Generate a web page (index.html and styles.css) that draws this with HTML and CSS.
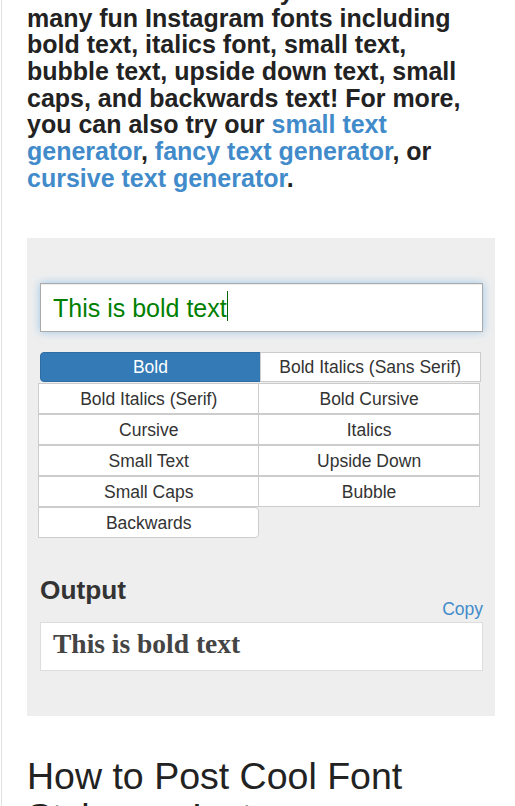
FILE: index.html
```html
<!DOCTYPE html>
<html lang="en">
<head>
<meta charset="utf-8">
<title>Instagram Fonts</title>
<link rel="stylesheet" href="styles.css">
</head>
<body>
<div class="page">
  <p class="intro">This cool tool will let you use and see many fun Instagram fonts including bold text, italics font, small text, bubble text, upside down text, small caps, and backwards text! For more, you can also try our <a href="#">small text generator</a>, <a href="#">fancy text generator</a>, or <a href="#">cursive text generator</a>.</p>

  <section class="tool">
    <div class="field" role="textbox"><span class="field-text">This is bold text</span><span class="caret"></span></div>

    <div class="styles-top">
      <button class="btn active">Bold</button>
      <button class="btn">Bold Italics (Sans Serif)</button>
    </div>
    <div class="styles-grid">
      <button class="btn">Bold Italics (Serif)</button>
      <button class="btn">Bold Cursive</button>
      <button class="btn">Cursive</button>
      <button class="btn">Italics</button>
      <button class="btn">Small Text</button>
      <button class="btn">Upside Down</button>
      <button class="btn">Small Caps</button>
      <button class="btn">Bubble</button>
      <button class="btn last">Backwards</button>
    </div>

    <div class="out-head">
      <h4>Output</h4>
      <a href="#" class="copy">Copy</a>
    </div>
    <div class="output">This is bold text</div>
  </section>

  <h2 class="section-title">How to Post Cool Font Styles on Instagram</h2>
</div>
</body>
</html>
```
FILE: styles.css
```css
html, body {
  margin: 0;
  padding: 0;
  background: #fff;
}

body {
  font-family: "Liberation Sans", Arial, sans-serif;
  color: #333;
  height: 806px;
  overflow: hidden;
}

.page {
  margin-left: 1px;
  border-left: 1px solid #e2e2e2;
  padding: 0 20px 0 25px;
  min-height: 806px;
}

.intro {
  margin: -22px 4px 46.7px 0;
  font-size: 25px;
  font-weight: bold;
  line-height: 26.67px;
  color: #222;
}

.intro a {
  color: #428bca;
  text-decoration: none;
}

.tool {
  background: #eee;
  padding: 45.3px 12px 45.4px 13px;
}

.field {
  box-sizing: border-box;
  height: 49px;
  border: 1px solid #aaa;
  background: #fff;
  box-shadow: inset 0 1px 1px rgba(0, 0, 0, .075), 0 0 8px rgba(102, 175, 233, .6);
  padding: 0 12px;
  font-family: "Liberation Sans", Arial, sans-serif;
  font-size: 25px;
  line-height: 48px;
  color: #008000;
  white-space: nowrap;
}

.caret {
  display: inline-block;
  width: 1px;
  height: 30px;
  background: #006400;
  vertical-align: -4px;
}

.btn {
  box-sizing: border-box;
  margin: 0;
  padding: 0;
  border: 1px solid #ccc;
  background: #fff;
  color: #333;
  font-family: "Liberation Sans", Arial, sans-serif;
  font-size: 17.5px;
  line-height: 29px;
  text-align: center;
  white-space: nowrap;
}

.styles-top {
  display: flex;
  width: 440.7px;
  margin-top: 20px;
  margin-bottom: 1px;
}

.styles-top .btn {
  flex: 1 1 0;
  height: 30px;
  line-height: 28px;
}

.styles-top .btn + .btn {
  margin-left: -1px;
}

.btn.active {
  background: #337ab7;
  border-color: #2e6da4;
  color: #fff;
  border-radius: 4px 0 0 4px;
}

.styles-grid {
  display: grid;
  grid-template-columns: 1fr 1fr;
  grid-auto-rows: 31px;
  width: 441.7px;
  margin-left: -1.7px;
}

.styles-grid .btn {
  height: 31px;
  padding-top: 1px;
  line-height: 28px;
}

.styles-grid .btn:nth-child(even) {
  margin-left: -1px;
}

.btn.last {
  border-radius: 0 4px 4px 0;
}

.out-head {
  display: flex;
  justify-content: space-between;
  align-items: flex-end;
  margin-top: 38px;
}

.out-head h4 {
  margin: 0 0 16.5px;
  font-size: 26.25px;
  line-height: 1.1;
  font-weight: bold;
  color: #333;
}

.copy {
  font-size: 17.5px;
  line-height: 25px;
  color: #428bca;
  text-decoration: none;
}

.output {
  box-sizing: border-box;
  height: 49px;
  border: 1px solid #ddd;
  background: #fff;
  padding: 0 12px 6px;
  font-family: "Liberation Serif", "Times New Roman", serif;
  font-weight: bold;
  font-size: 27.5px;
  line-height: 42px;
  color: #444;
}

.section-title {
  margin: 40px 0 0;
  font-size: 37.5px;
  line-height: 41.25px;
  font-weight: normal;
  color: #222;
}
```
